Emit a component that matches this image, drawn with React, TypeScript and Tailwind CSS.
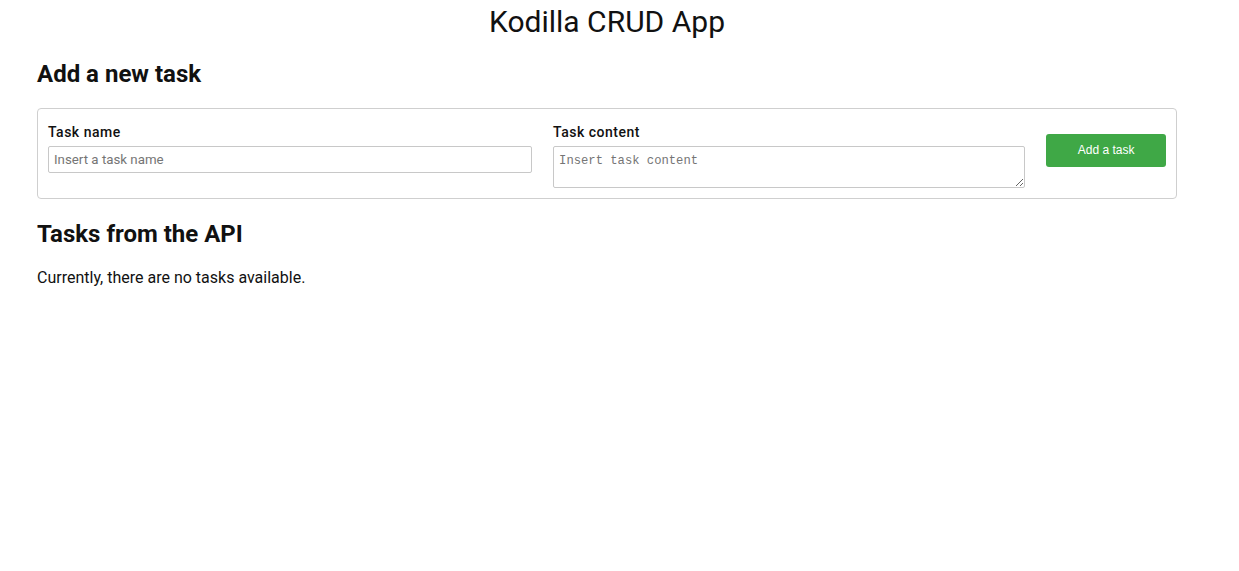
import { useState } from "react";

export default function App() {
  const [name, setName] = useState("");
  const [content, setContent] = useState("");

  return (
    <div className="w-[1214px] bg-white text-[#111] font-['Roboto',sans-serif]">
      <h1 className="pt-[4px] text-center text-[30px] leading-[36px] font-normal">
        Kodilla CRUD App
      </h1>
      <div className="px-[37px]">
        <h2 className="mt-[20px] text-[24px] leading-[29px] font-bold">
          Add a new task
        </h2>
        <form
          className="mt-[19px] flex gap-[21px] rounded-[4px] border border-[#cfcfcf] px-[10px] pt-[13px] pb-[10px]"
          onSubmit={(e) => e.preventDefault()}
        >
          <div className="flex w-[485px] flex-col gap-[4px]">
            <label className="text-[14px] leading-[20px] font-medium tracking-[0.5px]">
              Task name
            </label>
            <input
              type="text"
              placeholder="Insert a task name"
              value={name}
              onChange={(e) => setName(e.target.value)}
              className="h-[27px] rounded-[2px] border border-[#c8c8c8] px-[5px] text-[13.3px] placeholder:text-[#757575] outline-none"
            />
          </div>
          <div className="flex w-[473px] flex-col gap-[4px]">
            <label className="text-[14px] leading-[20px] font-medium tracking-[0.5px]">
              Task content
            </label>
            <textarea
              placeholder="Insert task content"
              value={content}
              onChange={(e) => setContent(e.target.value)}
              className="h-[42px] rounded-[2px] border border-[#c8c8c8] px-[5px] pt-[7px] pb-[1px] font-['Liberation_Mono',monospace] text-[12.2px] leading-[14px] placeholder:text-[#757575] outline-none"
            />
          </div>
          <button
            type="submit"
            className="mt-[12px] h-[33px] w-[120px] self-start rounded-[3px] bg-[#3fa846] pb-[2px] font-['Liberation_Sans',Arial,sans-serif] text-[12px] text-white"
          >
            Add a task
          </button>
        </form>
        <h2 className="mt-[21px] text-[24px] leading-[29px] font-bold">
          Tasks from the API
        </h2>
        <p className="mt-[17px] text-[16px] leading-[24px]">
          Currently, there are no tasks available.
        </p>
      </div>
    </div>
  );
}
